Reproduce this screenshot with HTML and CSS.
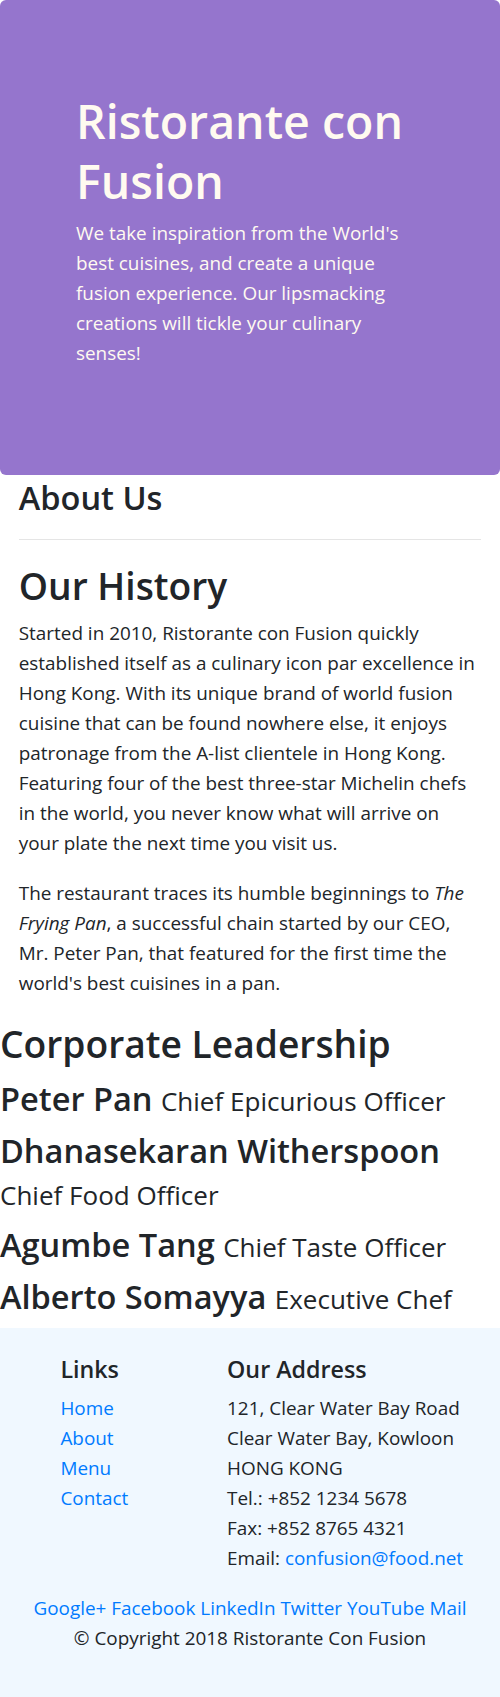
FILE: index.html
```html
<!DOCTYPE html>
<html lang="en">
<head>
<meta charset="utf-8">
<title>Ristorante con Fusion: About Us</title>
<link rel="stylesheet" href="styles.css">
</head>
<body>
<header class="jumbotron">
  <h1 class="jumbo-title">Ristorante con Fusion</h1>
  <p class="jumbo-text">We take inspiration from the World's best cuisines, and create a unique fusion experience. Our lipsmacking creations will tickle your culinary senses!</p>
</header>

<main>
  <section class="about">
    <h3 class="about-title">About Us</h3>
    <hr class="divider">
    <h2 class="history-title">Our History</h2>
    <p class="text">Started in 2010, Ristorante con Fusion quickly established itself as a culinary icon par excellence in Hong Kong. With its unique brand of world fusion cuisine that can be found nowhere else, it enjoys patronage from the A-list clientele in Hong Kong. Featuring four of the best three-star Michelin chefs in the world, you never know what will arrive on your plate the next time you visit us.</p>
    <p class="text">The restaurant traces its humble beginnings to <em>The Frying Pan</em>, a successful chain started by our CEO, Mr. Peter Pan, that featured for the first time the world's best cuisines in a pan.</p>
  </section>

  <section class="leadership">
    <h2 class="leadership-title">Corporate Leadership</h2>
    <h3 class="leader">Peter Pan <small class="role">Chief Epicurious Officer</small></h3>
    <h3 class="leader">Dhanasekaran Witherspoon <small class="role">Chief Food Officer</small></h3>
    <h3 class="leader">Agumbe Tang <small class="role">Chief Taste Officer</small></h3>
    <h3 class="leader">Alberto Somayya <small class="role">Executive Chef</small></h3>
  </section>
</main>

<footer class="footer">
  <div class="footer-cols">
    <div class="links-col">
      <h5 class="footer-title">Links</h5>
      <ul class="link-list">
        <li><a class="link" href="#">Home</a></li>
        <li><a class="link" href="#">About</a></li>
        <li><a class="link" href="#">Menu</a></li>
        <li><a class="link" href="#">Contact</a></li>
      </ul>
    </div>
    <div class="address-col">
      <h5 class="footer-title">Our Address</h5>
      <address class="address">
        121, Clear Water Bay Road<br>
        Clear Water Bay, Kowloon<br>
        HONG KONG<br>
        Tel.: +852 1234 5678<br>
        Fax: +852 8765 4321<br>
        Email: <a class="link" href="#">confusion@food.net</a>
      </address>
    </div>
  </div>
  <div class="social">
    <a class="link" href="#">Google+</a>
    <a class="link" href="#">Facebook</a>
    <a class="link" href="#">LinkedIn</a>
    <a class="link" href="#">Twitter</a>
    <a class="link" href="#">YouTube</a>
    <a class="link" href="#">Mail</a>
  </div>
  <p class="copyright">© Copyright 2018 Ristorante Con Fusion</p>
</footer>
</body>
</html>
```

FILE: styles.css
```css
* {
  box-sizing: border-box;
}

html, body {
  margin: 0;
  padding: 0;
}

body {
  font-family: "Open Sans", "Noto Sans", sans-serif;
  font-size: 18.9px;
  line-height: 30px;
  color: #212529;
  background: #ffffff;
}

.jumbotron {
  background: #9575cd;
  color: #fffaf0;
  border-radius: 6px;
  padding: 87.5px 76px;
}

.jumbo-title {
  margin: 0 0 7px;
  padding-top: 3px;
  font-size: 46.5px;
  line-height: 60px;
  font-weight: 600;
}

.jumbo-text {
  margin: 0 0 20px;
}

.about {
  padding: 0 18.75px;
}

.about-title {
  margin: 0 0 8px;
  padding-top: 2px;
  font-size: 32.55px;
  line-height: 42px;
  font-weight: 600;
}

.divider {
  margin: 20px 0;
  border: 0;
  border-top: 1px solid rgba(0, 0, 0, 0.1);
  height: 0;
}

.history-title,
.leadership-title {
  margin: 0 0 8px;
  padding-top: 2px;
  font-size: 37.2px;
  line-height: 48px;
  font-weight: 600;
}

.text {
  margin: 0 0 20px;
}

.leadership {
  padding-bottom: 2px;
}

.leader {
  margin: 0 0 8px;
  padding-top: 2px;
  font-size: 32.55px;
  line-height: 42px;
  font-weight: 600;
}

.role {
  font-size: 80%;
  font-weight: 400;
  line-height: 1;
}

.footer {
  background: #f0f8ff;
  padding: 25px 0;
}

.footer-cols {
  display: flex;
  padding-left: 41.67px;
}

.links-col {
  flex: 0 0 166.67px;
  padding: 0 18.75px;
}

.address-col {
  flex: 0 0 291.67px;
  padding: 0 18.75px;
}

.footer-title {
  margin: 0 0 9px;
  padding-top: 1px;
  font-size: 23.25px;
  line-height: 30px;
  font-weight: 600;
}

.link-list {
  list-style: none;
  margin: 0 0 20px;
  padding: 0;
}

.address {
  font-style: normal;
  margin: 0 0 20px;
}

.link {
  color: #007bff;
  text-decoration: none;
}

.social {
  text-align: center;
}

.copyright {
  text-align: center;
  margin: 0 0 20px;
}
```
